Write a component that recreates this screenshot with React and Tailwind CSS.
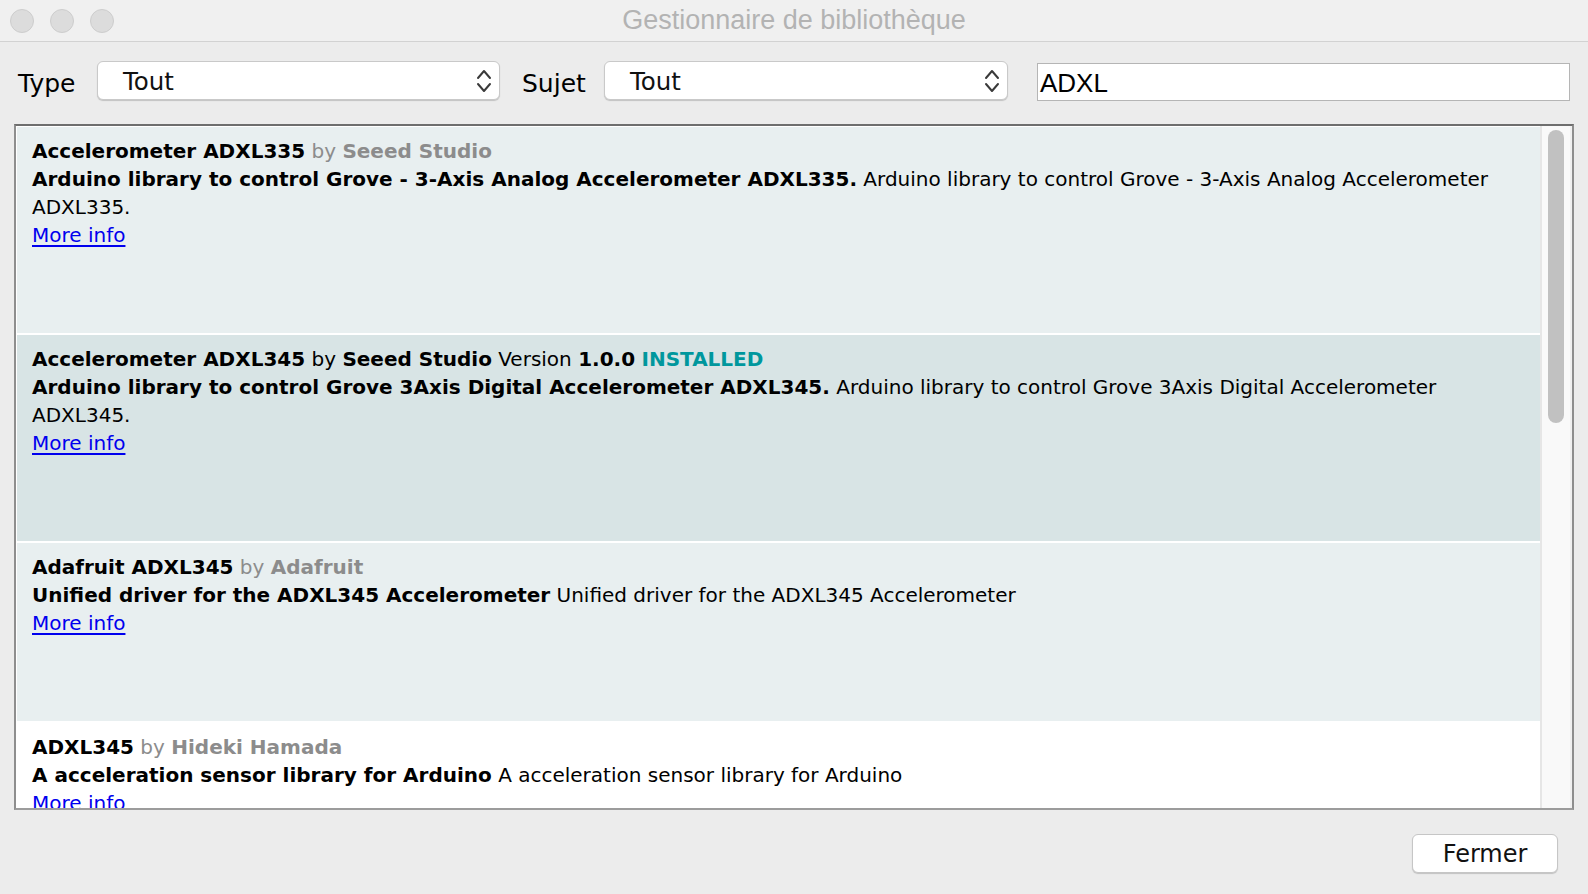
import React from "react";

const ui = { fontFamily: '"DejaVu Sans", Verdana, sans-serif' };
const helv = { fontFamily: '"Liberation Sans", Arial, sans-serif' };

function Chevrons() {
  return (
    <svg width="16" height="26" viewBox="0 0 16 26" fill="none" stroke="#3a3a3a" strokeWidth="2" strokeLinecap="round" strokeLinejoin="round">
      <polyline points="2,10 8,3 14,10" />
      <polyline points="2,16 8,23 14,16" />
    </svg>
  );
}

function Select({ value, width }) {
  return (
    <div
      className="h-[39px] shrink-0 flex items-center justify-between rounded-[6px] bg-white border border-[#c9c9c9] shadow-[0_1px_1px_rgba(0,0,0,0.18)] pl-[25px] pr-[7px]"
      style={{ width }}
    >
      <span className="text-[24.5px] leading-none text-[#111] mt-[4px]">{value}</span>
      <Chevrons />
    </div>
  );
}

const libs = [
  {
    name: "Accelerometer ADXL335",
    author: "Seeed Studio",
    bold: "Arduino library to control Grove - 3-Axis Analog Accelerometer ADXL335.",
    text: "Arduino library to control Grove - 3-Axis Analog Accelerometer ADXL335.",
    bg: "bg-[#e8eff0]",
  },
  {
    name: "Accelerometer ADXL345",
    author: "Seeed Studio",
    version: "1.0.0",
    installed: true,
    bold: "Arduino library to control Grove 3Axis Digital Accelerometer ADXL345.",
    text: "Arduino library to control Grove 3Axis Digital Accelerometer ADXL345.",
    bg: "bg-[#d8e4e5]",
  },
  {
    name: "Adafruit ADXL345",
    author: "Adafruit",
    bold: "Unified driver for the ADXL345 Accelerometer",
    text: "Unified driver for the ADXL345 Accelerometer",
    bg: "bg-[#e8eff0]",
  },
  {
    name: "ADXL345",
    author: "Hideki Hamada",
    bold: "A acceleration sensor library for Arduino",
    text: "A acceleration sensor library for Arduino",
    bg: "bg-white",
  },
];

function LibRow({ lib }) {
  return (
    <div className={`${lib.bg} shrink-0 pl-[15px] pr-[15px] pt-[10px] pb-[84px] text-[20px] leading-[28px] text-black`}>
      <div>
        <b>{lib.name}</b>
        {lib.installed ? (
          <>
            {" by "}
            <b>{lib.author}</b>
            {" Version "}
            <b>{lib.version}</b> <b className="text-[#00979d]">INSTALLED</b>
          </>
        ) : (
          <span className="text-[#8c8c8c]">
            {" by "}
            <b>{lib.author}</b>
          </span>
        )}
      </div>
      <div>
        <b>{lib.bold}</b> {lib.text}
      </div>
      <div>
        <a href="#" className="text-[#0000ee] underline underline-offset-[3px]">More info</a>
      </div>
    </div>
  );
}

export default function App() {
  return (
    <div className="w-[1588px] h-[894px] bg-[#ececec] flex flex-col overflow-hidden" style={ui}>
      {/* title bar */}
      <div className="h-[42px] shrink-0 bg-[#f0f0f0] border-b border-[#d2d2d2] grid grid-cols-[1fr_auto_1fr] items-center">
        <div className="flex items-center gap-[16px] pl-[10px]">
          <span className="w-[24px] h-[24px] rounded-full bg-[#dcdcdc] border border-[#cdcdcd]" />
          <span className="w-[24px] h-[24px] rounded-full bg-[#dcdcdc] border border-[#cdcdcd]" />
          <span className="w-[24px] h-[24px] rounded-full bg-[#dcdcdc] border border-[#cdcdcd]" />
        </div>
        <div className="text-[27px] text-[#b3b3b3] leading-none" style={helv}>
          Gestionnaire de bibliothèque
        </div>
        <div />
      </div>

      {/* filter toolbar */}
      <div className="h-[82px] shrink-0 flex items-start pt-[19px] pl-[18px]">
        <span className="w-[79px] h-[39px] shrink-0 flex items-center pt-[6px] text-[25px] text-black">Type</span>
        <Select value="Tout" width={403} />
        <span className="w-[104px] h-[39px] shrink-0 flex items-center pt-[6px] pl-[22px] text-[25px] text-black">Sujet</span>
        <Select value="Tout" width={404} />
        <div className="ml-[29px] mt-[2px] w-[533px] h-[38px] shrink-0 bg-white border border-[#b5b5b5] flex items-center pl-[2px]">
          <span className="text-[26px] leading-none text-black mt-[2px]" style={helv}>ADXL</span>
        </div>
      </div>

      {/* library list */}
      <div className="ml-[14px] w-[1560px] h-[686px] shrink-0 bg-white border-2 border-t-[#6e6e6e] border-x-[#8e8e8e] border-b-[#9c9c9c] flex overflow-hidden">
        <div className="flex-1 flex flex-col gap-[2px] pt-[1px] pl-[1px] overflow-hidden">
          {libs.map((lib) => (
            <LibRow key={lib.name} lib={lib} />
          ))}
        </div>
        <div className="w-[32px] shrink-0 bg-[#f9f9f9] border-l-2 border-[#e6e6e6] border-r-2 border-r-[#f0f0f0] pt-[4px] pl-[6px]">
          <div className="w-[16px] h-[293px] rounded-full bg-[#c1c1c1]" />
        </div>
      </div>

      {/* footer */}
      <div className="flex-1 flex justify-end items-start pt-[24px] pr-[30px]">
        <button className="w-[146px] h-[39px] rounded-[6px] bg-white border border-[#c6c6c6] shadow-[0_1px_1px_rgba(0,0,0,0.18)] text-[24px] leading-none text-[#111]">
          Fermer
        </button>
      </div>
    </div>
  );
}
